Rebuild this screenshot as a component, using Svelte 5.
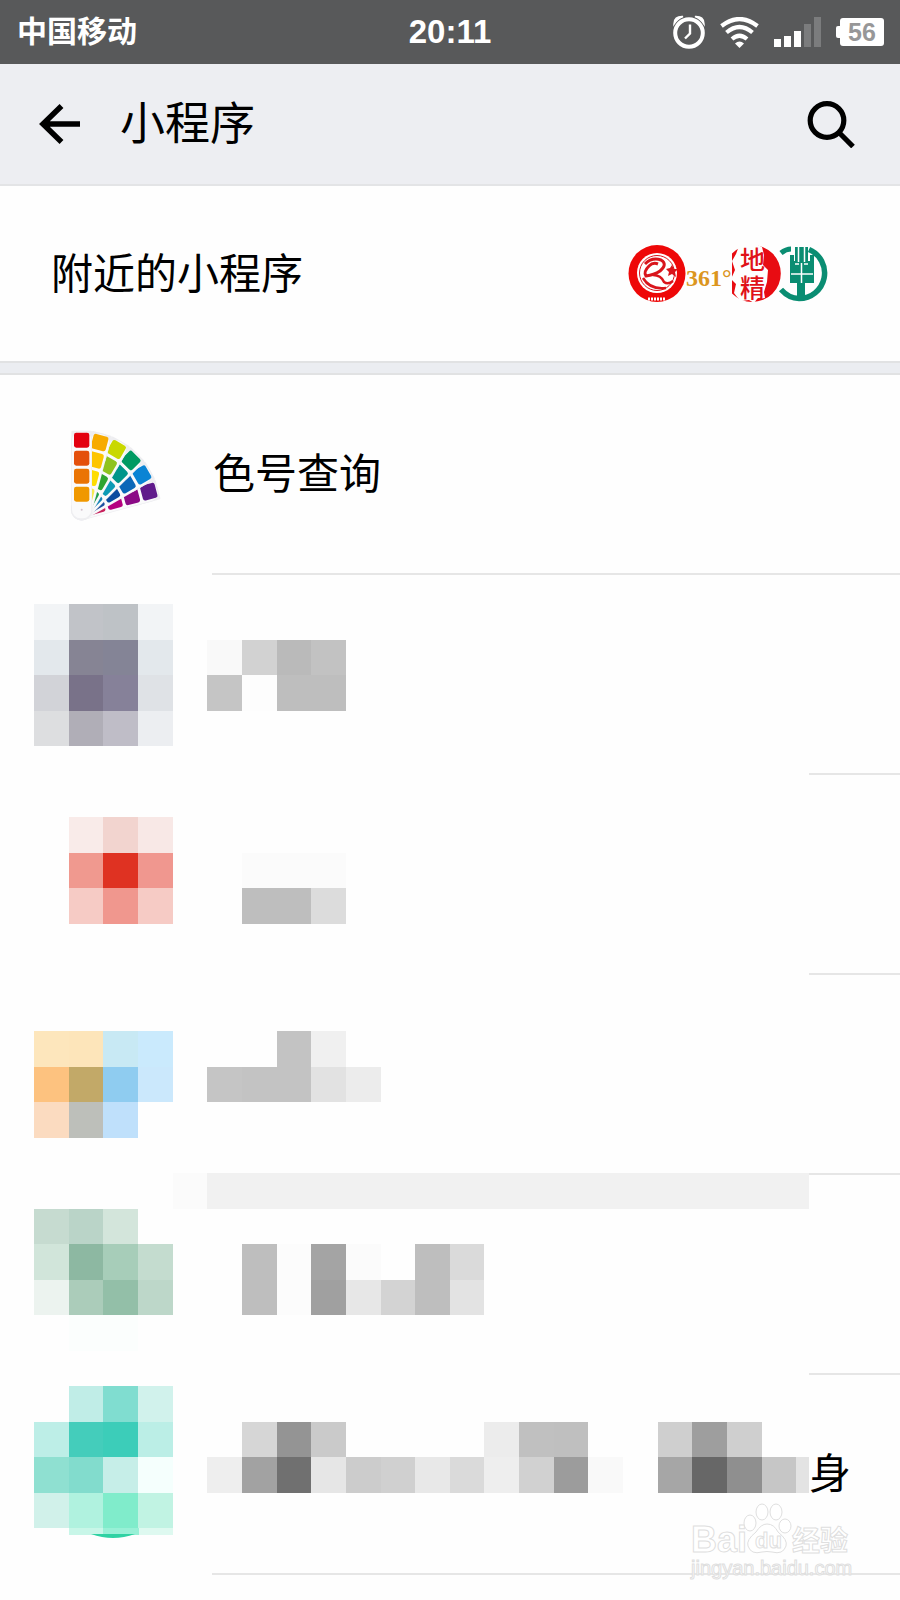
<script lang="ts">
    interface MosaicRow {
        // distance from the top of the row to the first line of tiles
        top: number;
        lines: string[];
        shortLine?: boolean;
        tail?: string;
    }

    const TILE_W = 34.65;
    const TILE_H = 35.55;
    const MOSAIC_W = 775;

    // One string per line of tiles, "." leaves the tile empty
    const rows: MosaicRow[] = [
        {
            top: 29,
            shortLine: true,
            lines: [
                "f2f4f6 c1c3c8 bec2c6 f2f4f6",
                "e3e8ec 868494 848496 e3e8ec . f9f9f9 d2d2d2 bababa c2c2c2",
                "d2d3d8 797289 868199 dfe2e6 . c5c5c5 fdfdfd bebebe bebebe",
                "dddee0 b0aeb7 bfbdc7 eceef1",
            ],
        },
        {
            top: 42,
            shortLine: true,
            lines: [
                ". f9ebe9 f2d4cf f8e8e6",
                ". f0998f df3222 f0978f . . fbfbfb fbfbfb fbfbfb",
                ". f6cbc5 f0978e f6cbc5 . . bebebe bebebe dcdcdc",
            ],
        },
        {
            top: 56,
            shortLine: true,
            lines: [
                "fde6bc fde5ba c8e9f4 caeafd . . . c3c3c3 f0f0f0",
                "fdc27f c2a968 8fccf0 cbe8fc . c5c5c5 c3c3c3 c3c3c3 e2e2e2 ececec",
                "fbdbc0 bdbfba bfe0fb",
            ],
        },
        {
            top: -2,
            shortLine: true,
            lines: [
                ". . . . fbfbfb" + " f1f1f1".repeat(18),
                "c6dbd0 bad4c8 d3e5db",
                "d1e5da 8db8a2 a7cdb9 c4dccf . . bebebe fcfcfc a4a4a4 fbfbfb . bebebe dadada",
                "ecf3ef abccba 93bfa8 bdd7c9 . . bebebe fcfcfc a0a0a0 e7e7e7 d3d3d3 bebebe e3e3e3",
                ". fbfefd fbfefd",
            ],
        },
        {
            top: 11,
            tail: "身",
            lines: [
                ". c0ede7 80ddd0 d1f2ec",
                "bdeee7 44cdbb 3ccdb9 bbeee6 . . d6d6d6 949494 cacaca . . . . ececec c0c0c0 bfbfbf . . cfcfcf 9e9e9e cfcfcf",
                "8fe0d1 82dccd c6eee8 f5fffd . eeeeee a2a2a2 707070 e6e6e6 cccccc d0d0d0 e8e8e8 dadada eeeeee d1d1d1 9c9c9c f9f9f9 fefefe a6a6a6 676767 8f8f8f c6c6c6 e3e3e3",
                "d1f1ea b0f2df 80eccb c1f3e3",
            ],
        },
    ];

    function tiles(row: MosaicRow) {
        return row.lines.flatMap((line, r) =>
            line.split(" ").flatMap((color, c) => {
                if (color === ".") return [];
                const x = Math.round(c * TILE_W);
                const y = row.top + Math.round(r * TILE_H);
                return [
                    {
                        x,
                        y,
                        w: Math.min(Math.round((c + 1) * TILE_W), MOSAIC_W) - x,
                        h: row.top + Math.round((r + 1) * TILE_H) - y,
                        fill: "#" + color,
                    },
                ];
            }),
        );
    }

    // Colour fan, blades from right to left so the upright one lies on top
    const blades = [
        { angle: 75, colors: ["#5f1a8b", "#8b0a86", "#b5007f", "#c8205c"] },
        { angle: 60, colors: ["#0a84d4", "#0a67b8", "#0c4ca0", "#1c4fa0"] },
        { angle: 45, colors: ["#009a62", "#00958a", "#0d9bb5", "#1583b8"] },
        { angle: 30, colors: ["#c9d800", "#8fc31f", "#2fa52f", "#22a04a"] },
        { angle: 15, colors: ["#f7ab00", "#fdc500", "#fddc00", "#f5ea50"] },
        { angle: 0, colors: ["#e3000f", "#e4500c", "#ea7404", "#f09800"] },
    ];

    const signal = [
        { h: 8, on: true },
        { h: 11, on: true },
        { h: 16, on: true },
        { h: 23, on: false },
        { h: 30, on: false },
    ];
</script>

<div class="page">
    <div class="status-bar">
        <span class="carrier">中国移动</span>
        <span class="time">20:11</span>
        <div class="status-icons">
            <svg width="32" height="34" viewBox="0 0 32 34" fill="none" stroke="#fff">
                <circle cx="16" cy="18" r="13.800" stroke-width="4" />
                <path d="M17 9.500v9l-5 5" stroke-width="2.400" />
                <path d="M1 9Q1 1 10 1.500Q4 4 1 9ZM31 9Q31 1 22 1.500Q28 4 31 9Z" fill="#fff" stroke-width="1.500" />
            </svg>
            <svg width="39" height="31" viewBox="0 0 39 31" fill="none" stroke="#fff" stroke-width="4.200">
                <path d="M1.500 9Q19.500-5 37.500 9M6.500 15.500Q19.500 4.500 32.500 15.500M12 22Q19.500 15.500 27 22" />
                <path d="M15 26.500Q19.500 22.500 24 26.500L19.500 31Z" fill="#fff" stroke="none" />
            </svg>
            <div class="signal">
                {#each signal as bar}
                    <span class="bar" class:on={bar.on} style="height: {bar.h}px"></span>
                {/each}
            </div>
            <div class="battery">
                <span class="battery-tip"></span>
                <span class="battery-body">56</span>
            </div>
        </div>
    </div>

    <header class="app-bar">
        <button class="icon-button" aria-label="返回">
            <svg width="42" height="42" viewBox="0 0 42 42" fill="none" stroke="#000" stroke-width="5.500">
                <path d="M41 21H4M22.500 3L4 21L22.500 39" />
            </svg>
        </button>
        <h1>小程序</h1>
        <button class="icon-button" aria-label="搜索">
            <svg width="48" height="48" viewBox="0 0 48 48" fill="none" stroke="#000" stroke-width="5.200">
                <circle cx="20" cy="20.500" r="16.800" />
                <path d="M31.500 32L46 46.500" />
            </svg>
        </button>
    </header>

    <a class="nearby" href="#nearby">
        <span class="label">附近的小程序</span>
        <svg class="logos" width="200" height="60" viewBox="0 0 200 60">
            <circle cx="29" cy="29.500" r="28.500" fill="#ee0808" />
            <circle cx="29" cy="29" r="20" fill="#fff" />
            <circle cx="29" cy="29" r="17.500" fill="none" stroke="#d9151c" stroke-width="1" />
            <g fill="none" stroke="#d9151c">
                <path d="M17 20Q24 13 33 16Q40 20 32 27Q26 31 18 32Q15 28 21 22Q25 18 30 20" stroke-width="3" />
                <path d="M25 31Q33 31 36 38Q40 41 45 37M15 34Q22 46 38 44" stroke-width="2.500" />
            </g>
            <path d="M44 21l2 4 4 0-3 3 1 5-4-3-4 2 1-4-3-3 4-1z" fill="#d9151c" />
            <path d="M20 55h18" stroke="#fff" stroke-width="3" stroke-dasharray="2 1" />

            <text class="logo-361" x="58" y="42">361°</text>

            <path d="M104 9.500A28.500 28.500 0 1 1 104 49.500Z" fill="#e80c12" />
            <path d="M111 2l6-2 4 1 7-1 6 3 2 8-1 10 5 5-1 12-3 10 1 6-8 1-3 4-5-3-8 1-4-4-3-4 2-9-5-5 4-9-3-9 4-7z" fill="#fefefe" />
            <text class="logo-seal" x="112" y="25">地</text>
            <text class="logo-seal" x="112" y="53">精</text>

            <g fill="none" stroke="#0a8d72">
                <path d="M153 9Q158 5 163 5" stroke-width="5" />
                <path d="M181 5.500A25.500 25.500 0 0 1 171 54.500Q161 54.500 153 45.500" stroke-width="5.500" />
            </g>
            <path d="M167 3h13v14h2v-6h4v28h-9v17h-8v-17h-7V11h4v6h1z" fill="#0a8d72" />
            <path d="M170.500 3v15M176.500 3v15M173.500 19v20M163 30h22M167 20h4M176 20h4" stroke="#fefefe" stroke-width="1.500" />
        </svg>
    </a>

    <div class="divider"></div>

    <ul class="list">
        <li class="row">
            <a class="program" href="#colors">
                <svg class="fan" width="110" height="110" viewBox="0 0 330 330">
                    <g transform="translate(0 4)">
                        {#each blades as blade}
                            <g transform="rotate({blade.angle} 65 268)">
                                <rect x="34" y="31" width="62" height="268" rx="28" fill="#eeeef1" />
                                <rect x="34" y="31" width="62" height="80" rx="4" fill="#eeeef1" />
                                <rect x="36" y="34" width="58" height="260" rx="26" fill="#fafafb" />
                                {#each blade.colors as color, i}
                                    <rect x="42" y={37 + i * 54} width="46" height="45" rx="7" fill={color} />
                                {/each}
                            </g>
                        {/each}
                        <circle cx="65" cy="268" r="3" fill="#d3c3ce" />
                    </g>
                </svg>
                <span class="label">色号查询</span>
            </a>
            <div class="line"></div>
        </li>
        {#each rows as row}
            <li class="row">
                <div class="masked">
                    <svg class="mosaic" height="198" aria-hidden="true">
                        {#each tiles(row) as tile}
                            <rect x={tile.x} y={tile.y} width={tile.w} height={tile.h} fill={tile.fill} />
                        {/each}
                        {#if row.tail}
                            <rect x="35" y="153" width="34" height="7" fill="#c8f6e8" />
                            <rect x="69" y="153" width="36" height="7" fill="#98f0d6" />
                            <rect x="105" y="153" width="34" height="7" fill="#def9f0" />
                            <path d="M57 159Q79 167 101 159Z" fill="#2fd2a3" />
                        {/if}
                    </svg>
                    {#if row.tail}
                        <span class="label">{row.tail}</span>
                    {/if}
                </div>
                <div class="line" class:short={row.shortLine}></div>
            </li>
        {/each}
    </ul>

    <svg class="watermark" width="168" height="84" viewBox="0 0 168 84">
        <g fill="#fff" stroke="#dfdfdf" stroke-width="1">
            <text class="wm-brand" x="2" y="52">Bai</text>
            <ellipse cx="61" cy="23" rx="6" ry="8" />
            <ellipse cx="73" cy="12" rx="6" ry="8" />
            <ellipse cx="87" cy="12" rx="6" ry="8" />
            <ellipse cx="96" cy="26" rx="6" ry="7" />
            <path d="M78 24Q85 24 89 32Q99 40 97 46Q94 55 83 52Q78 51 73 52Q62 55 59 46Q57 40 67 32Q72 24 78 24Z" />
            <text class="wm-du" x="66" y="48">du</text>
            <text class="wm-cjk" x="103" y="51">经验</text>
            <text class="wm-url" x="2" y="75">jingyan.baidu.com</text>
        </g>
    </svg>
</div>

<style>
    :global(body) {
        background: #fefefe;
    }

    .page {
        position: relative;
        min-height: 100vh;
        overflow-x: hidden;
        background: #fefefe;
        color: #000;
        font-family: "Noto Sans CJK SC", sans-serif;
    }

    .status-bar {
        display: grid;
        grid-template-columns: 1fr auto 1fr;
        align-items: center;
        height: 64px;
        padding: 0 16px;
        background: #58595a;
        color: #fff;
    }

    .carrier {
        padding: 0 0 6px 1px;
        font-size: 30px;
        font-weight: 700;
        line-height: 58px;
    }

    .time {
        font-family: "Liberation Sans", Arial, sans-serif;
        font-size: 33px;
        font-weight: 700;
    }

    .status-icons {
        display: flex;
        align-items: center;
        justify-content: flex-end;
        gap: 15px;
    }

    .signal {
        display: flex;
        align-items: flex-end;
        gap: 3px;
    }

    .bar {
        width: 7px;
        background: #7b7c7d;
    }

    .bar.on {
        background: #fff;
    }

    .battery {
        display: flex;
        align-items: center;
    }

    .battery-tip {
        width: 4px;
        height: 12px;
        border-radius: 2px 0 0 2px;
        background: #fff;
    }

    .battery-body {
        width: 44px;
        border-radius: 3px;
        background: #fff;
        color: #979798;
        font-family: "Liberation Sans", Arial, sans-serif;
        font-size: 25px;
        font-weight: 700;
        line-height: 28px;
        text-align: center;
    }

    .app-bar {
        display: flex;
        align-items: center;
        height: 120px;
        padding: 0 45px 0 39px;
        border-bottom: 2px solid #e3e4e6;
        background: #edeef2;
    }

    .icon-button {
        display: flex;
        padding: 0;
        border: none;
        background: none;
        cursor: pointer;
    }

    h1 {
        flex: 1;
        margin: 0 0 0 39px;
        padding-bottom: 6px;
        font-size: 45px;
        font-weight: 400;
        line-height: 60px;
    }

    .nearby {
        display: flex;
        align-items: center;
        justify-content: space-between;
        height: 175px;
        padding: 0 72px 0 51px;
        color: inherit;
        text-decoration: none;
    }

    .label {
        padding-bottom: 6px;
        font-size: 42px;
        line-height: 60px;
    }

    .logos {
        overflow: visible;
    }

    .logo-361 {
        fill: #dc961e;
        font-family: "Liberation Serif", serif;
        font-size: 24px;
        font-weight: 700;
    }

    .logo-seal {
        fill: #e01218;
        font-size: 25px;
        font-weight: 500;
    }

    .divider {
        height: 10px;
        border-top: 2px solid #e1e2e3;
        border-bottom: 2px solid #e1e2e3;
        background: #ebedf1;
    }

    .list {
        margin: 0;
        padding: 0;
        list-style: none;
    }

    .program {
        display: flex;
        align-items: center;
        gap: 43px;
        height: 198px;
        padding-left: 60px;
        color: inherit;
        text-decoration: none;
    }

    .masked {
        display: flex;
        align-items: center;
        height: 198px;
        padding-left: 34px;
    }

    .mosaic {
        flex: 0 1 775px;
        min-width: 0;
        overflow: visible;
    }

    .line {
        height: 2px;
        margin-left: 212px;
        background: #e6e6e6;
    }

    .line.short {
        margin-left: 809px;
    }

    .watermark {
        position: absolute;
        right: 43px;
        bottom: 16px;
        overflow: visible;
    }

    .wm-brand,
    .wm-du {
        font-family: "Liberation Sans", Arial, sans-serif;
        font-weight: 700;
    }

    .wm-brand {
        font-size: 36px;
    }

    .wm-du {
        font-size: 22px;
    }

    .wm-cjk {
        font-size: 28px;
        font-weight: 700;
    }

    .wm-url {
        font-family: "Liberation Sans", Arial, sans-serif;
        font-size: 20px;
    }
</style>
